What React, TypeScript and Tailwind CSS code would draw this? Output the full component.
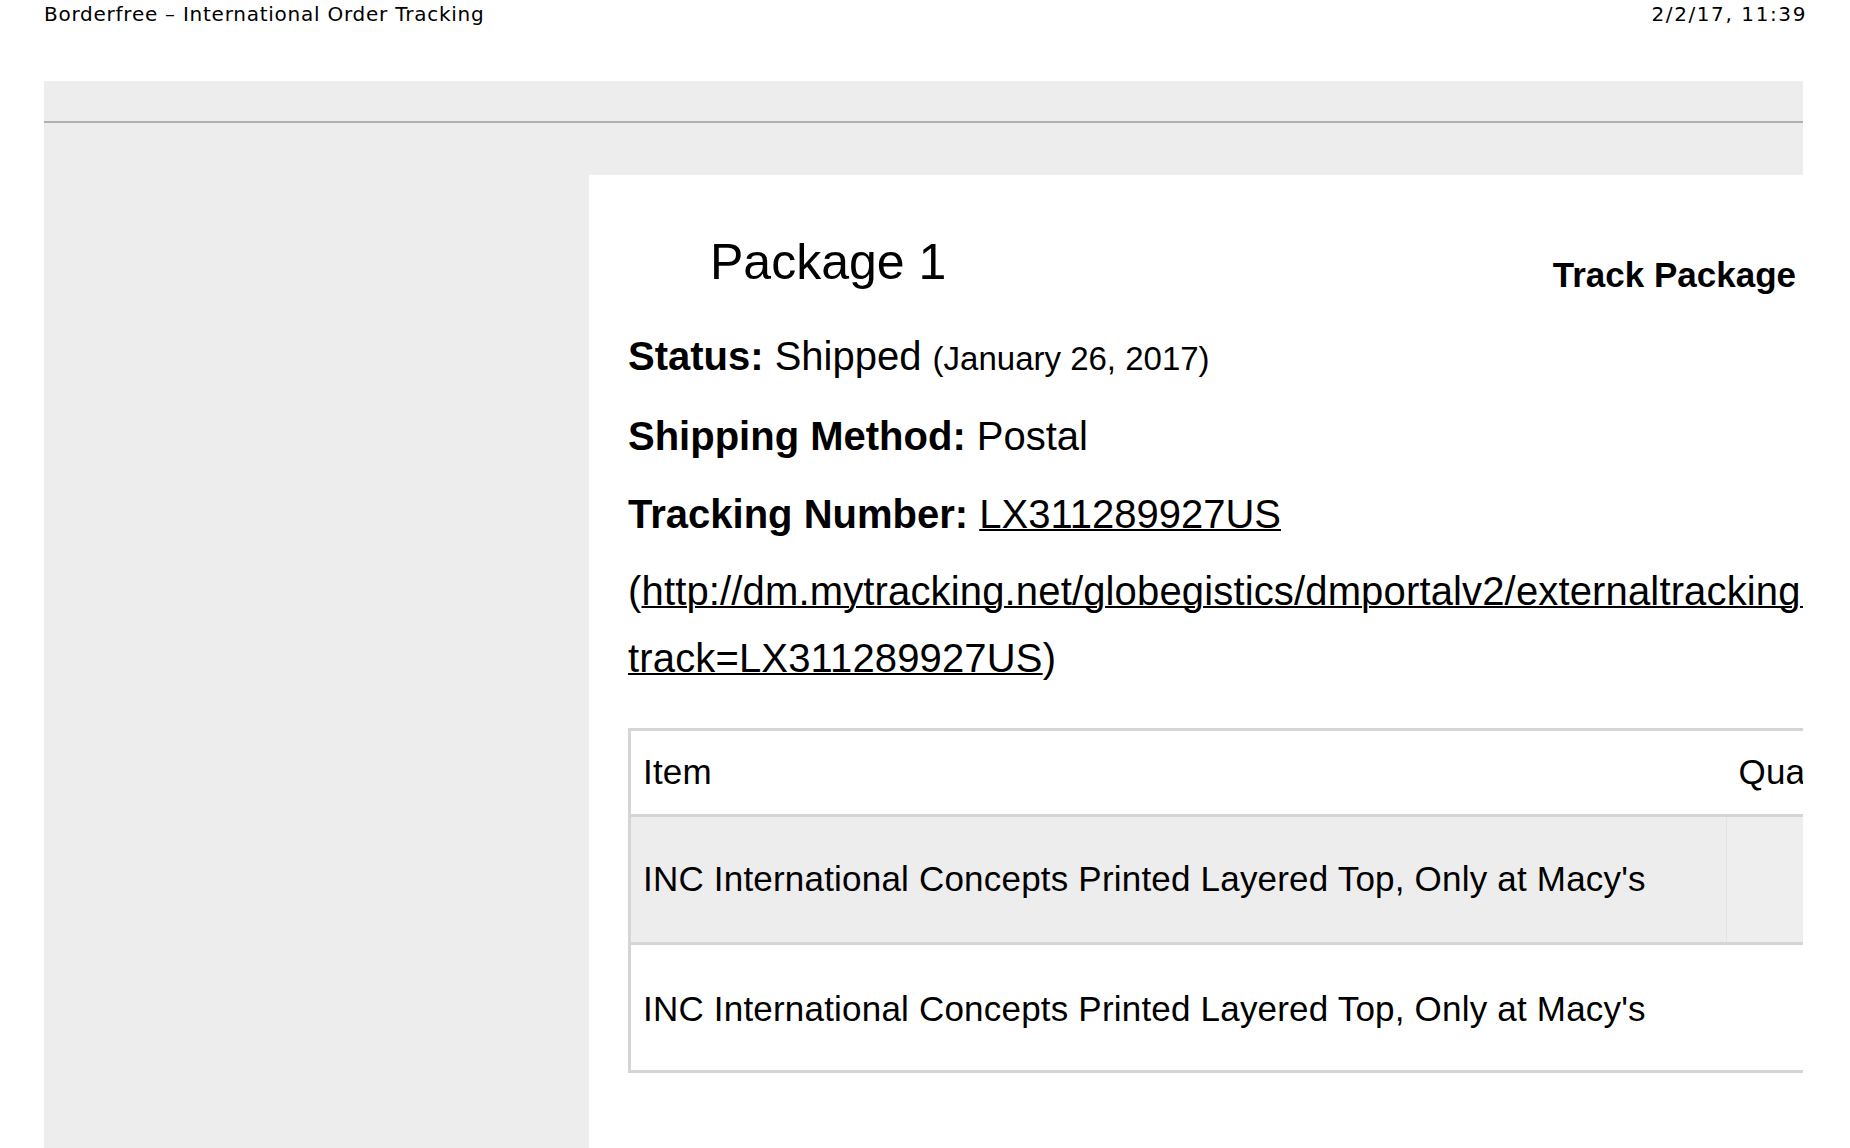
import React from 'react';

const items = [
  { name: "INC International Concepts Printed Layered Top, Only at Macy's", qty: '1', shaded: true },
  { name: "INC International Concepts Printed Layered Top, Only at Macy's", qty: '1', shaded: false },
];

const App = () => {
  return (
    <div className="h-[1148px] overflow-hidden bg-white text-black">
      <div className="flex h-[28px] items-center justify-between pl-[44px] pr-[43px] font-['DejaVu_Sans',sans-serif] text-[20px]">
        <span className="tracking-[0.75px]">Borderfree – International Order Tracking</span>
        <span className="tracking-[1.6px]">2/2/17, 11:39</span>
      </div>

      <div className="ml-[44px] mr-[47px] mt-[53px] h-[1067px] overflow-hidden bg-[#ededed] font-['Liberation_Sans',Arial,sans-serif]">
        <div className="h-[42px] border-b-2 border-[#b0b0b0]" />
        <div className="flex pt-[52px]">
          <div className="w-[545px] shrink-0" />
          <div className="h-[1000px] w-[1400px] shrink-0 bg-white pl-[39px] pt-[57px]">
            <div className="flex w-[1168px] items-start justify-between">
              <h1 className="ml-[82px] text-[50px] leading-[60px]">Package 1</h1>
              <span className="mt-[23px] text-[35px] font-bold leading-[40px]">Track Package</span>
            </div>

            <div className="mt-[28px] flex flex-col gap-[11px] text-[40px] leading-[67px]">
              <p>
                <b>Status:</b> Shipped <span className="text-[33px]">(January 26, 2017)</span>
              </p>
              <p>
                <b>Shipping Method:</b> Postal
              </p>
              <p>
                <b>Tracking Number:</b> <a className="underline decoration-2">LX311289927US</a>
              </p>
            </div>
            <p className="mt-[10px] w-[1160px] text-[40px] leading-[67px] tracking-[0.15px]">
              <span className="whitespace-nowrap">
                (<a className="underline decoration-2">http://dm.mytracking.net/globegistics/dmportalv2/externaltracking.aspx?</a>
              </span>
              <br />
              <a className="underline decoration-2">track=LX311289927US</a>)
            </p>

            <table className="mt-[36px] w-[1400px] border-collapse border-[3px] border-[#d5d5d5] text-[35px] tracking-[0.2px]">
              <thead>
                <tr className="h-[86px] border-b-[3px] border-[#d5d5d5]">
                  <th className="w-[1097px] pl-[12px] text-left font-normal">Item</th>
                  <th className="pl-[12px] text-left font-normal">Quantity</th>
                </tr>
              </thead>
              <tbody>
                {items.map((item, i) => (
                  <tr
                    key={i}
                    className={`h-[128px] border-b-[3px] border-[#d5d5d5] ${item.shaded ? 'bg-[#ededed]' : 'bg-white'}`}
                  >
                    <td className={item.shaded ? 'pl-[12px]' : 'pl-[12px] pt-[3px]'}>{item.name}</td>
                    <td
                      className={`border-l text-center ${item.shaded ? 'border-[#e4e4e4] bg-[#eeeeee]' : 'border-white'}`}
                    >
                      {item.qty}
                    </td>
                  </tr>
                ))}
              </tbody>
            </table>
          </div>
        </div>
      </div>
    </div>
  );
};

export default App;
